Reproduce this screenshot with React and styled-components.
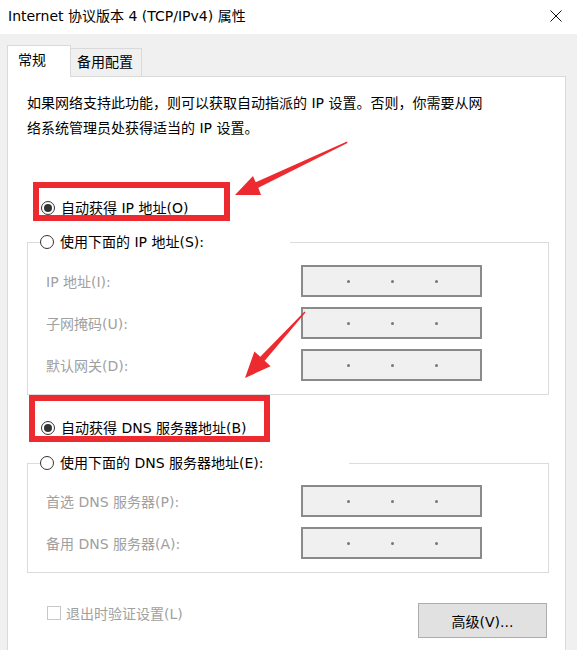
import styled, { createGlobalStyle } from "styled-components";

const GlobalStyle = createGlobalStyle`
  html, body {
    margin: 0;
    padding: 0;
    background: #f0f0f0;
  }
  * {
    box-sizing: border-box;
  }
`;

const FONT = `"DejaVu Sans", "Noto Sans CJK SC", sans-serif`;

const Window = styled.div`
  position: relative;
  width: 577px;
  height: 650px;
  overflow: hidden;
  background: #f0f0f0;
  font-family: ${FONT};
  font-size: 14px;
  color: #000;
  display: flex;
  flex-direction: column;
`;

const TitleBar = styled.div`
  height: 34px;
  background: #fff;
  display: flex;
  align-items: center;
  justify-content: space-between;
  padding: 0 15px 0 8px;
`;

const Title = styled.div`
  font-size: 14px;
  line-height: 1;
  padding-bottom: 2px;
`;

const CloseIcon = styled.svg`
  width: 12px;
  height: 12px;
  margin-bottom: 2px;
`;

const Body = styled.div`
  flex: 1;
  display: flex;
  flex-direction: column;
  padding: 11px 11px 0 7px;
`;

const TabRow = styled.div`
  display: flex;
  align-items: flex-end;
  height: 31px;
`;

const Tab = styled.div`
  position: relative;
  z-index: ${(p) => (p.$active ? 2 : 1)};
  height: ${(p) => (p.$active ? "32px" : "28px")};
  width: ${(p) => (p.$active ? "64px" : "71px")};
  margin-bottom: ${(p) => (p.$active ? "-1px" : "0")};
  background: ${(p) => (p.$active ? "#fff" : "#f0f0f0")};
  border: 1px solid #d9d9d9;
  border-bottom: none;
  border-left: ${(p) => (p.$active ? "1px solid #d9d9d9" : "none")};
  padding: ${(p) => (p.$active ? "4px 0 0 10px" : "3px 0 0 6px")};
  font-size: 14px;
  line-height: 20px;
`;

const Panel = styled.div`
  flex: 1;
  background: #fff;
  border: 1px solid #d9d9d9;
  border-bottom: none;
  padding: 14px 16px 0 19px;
  display: flex;
  flex-direction: column;
`;

const Description = styled.p`
  margin: 0;
  line-height: 25px;
  font-size: 14px;
  white-space: nowrap;
`;

const RadioRow = styled.label`
  display: flex;
  align-items: center;
  height: 20px;
  margin-top: ${(p) => p.$mt || "0px"};
  padding-left: 14px;
  gap: 6px;
  line-height: 20px;
`;

const RadioCircle = styled.span`
  width: 14px;
  height: 14px;
  border-radius: 50%;
  border: 1px solid #333;
  background: #fff;
  display: flex;
  align-items: center;
  justify-content: center;
  flex-shrink: 0;
  &::after {
    content: "";
    display: ${(p) => (p.$checked ? "block" : "none")};
    width: 8px;
    height: 8px;
    border-radius: 50%;
    background: #333;
  }
`;

const GroupBox = styled.fieldset`
  margin: ${(p) => p.$mt || "0px"} 0 0 0;
  padding: ${(p) => p.$pt} 0 13px 18px;
  border: 1px solid #dcdcdc;
  min-width: 0;
`;

const Legend = styled.legend`
  padding: 0;
  margin-left: -6px;
  width: ${(p) => p.$width};
  background: #fff;
`;

const LegendRow = styled.span`
  display: flex;
  align-items: center;
  height: 20px;
  gap: 6px;
  line-height: 20px;
`;

const FieldGrid = styled.div`
  display: grid;
  grid-template-columns: 255px 181px;
  row-gap: 10px;
  align-items: center;
`;

const FieldLabel = styled.span`
  color: #a0a0a0;
  font-size: 14px;
`;

const IpBox = styled.div`
  height: 32px;
  background: #f0f0f0;
  border: 2px solid #8a8a8a;
  display: grid;
  grid-template-columns: 47px 44px 44px 43px;
  align-items: center;
`;

const IpDot = styled.span`
  justify-self: end;
  width: 3px;
  height: 3px;
  border-radius: 50%;
  background: #777;
`;

const Footer = styled.div`
  margin-top: 30px;
  display: flex;
  justify-content: space-between;
  align-items: flex-start;
  padding: 0 2px 0 20px;
`;

const CheckRow = styled.label`
  display: flex;
  align-items: center;
  height: 20px;
  gap: 5px;
  color: #a0a0a0;
`;

const CheckBox = styled.span`
  width: 14px;
  height: 14px;
  border: 1px solid #c8c8c8;
  background: #fff;
`;

const Button = styled.button`
  width: 129px;
  height: 35px;
  background: #e1e1e1;
  border: 1px solid #adadad;
  font-family: ${FONT};
  font-size: 14px;
  color: #000;
  padding: 0;
`;

const Highlight = styled.div`
  position: absolute;
  left: ${(p) => p.$x}px;
  top: ${(p) => p.$y}px;
  width: ${(p) => p.$w}px;
  height: ${(p) => p.$h}px;
  border: 6px solid #ec2a2f;
  pointer-events: none;
`;

const Overlay = styled.svg`
  position: absolute;
  left: 0;
  top: 0;
  pointer-events: none;
`;

const IpField = () => (
  <IpBox>
    <IpDot />
    <IpDot />
    <IpDot />
  </IpBox>
);

export default function App() {
  return (
    <Window>
      <GlobalStyle />
      <TitleBar>
        <Title>Internet 协议版本 4 (TCP/IPv4) 属性</Title>
        <CloseIcon viewBox="0 0 12 12">
          <path d="M0.5 0.5 L11.5 11.5 M11.5 0.5 L0.5 11.5" stroke="#111" strokeWidth="1" />
        </CloseIcon>
      </TitleBar>
      <Body>
        <TabRow>
          <Tab $active>常规</Tab>
          <Tab>备用配置</Tab>
        </TabRow>
        <Panel>
          <Description>
            如果网络支持此功能，则可以获取自动指派的 IP 设置。否则，你需要从网
            <br />
            络系统管理员处获得适当的 IP 设置。
          </Description>
          <RadioRow $mt="57px">
            <RadioCircle $checked />
            自动获得 IP 地址(O)
          </RadioRow>
          <GroupBox $mt="14px" $pt="13px">
            <Legend $width="250px">
              <LegendRow>
                <RadioCircle />
                使用下面的 IP 地址(S):
              </LegendRow>
            </Legend>
            <FieldGrid>
              <FieldLabel>IP 地址(I):</FieldLabel>
              <IpField />
              <FieldLabel>子网掩码(U):</FieldLabel>
              <IpField />
              <FieldLabel>默认网关(D):</FieldLabel>
              <IpField />
            </FieldGrid>
          </GroupBox>
          <RadioRow $mt="23px">
            <RadioCircle $checked />
            自动获得 DNS 服务器地址(B)
          </RadioRow>
          <GroupBox $mt="15px" $pt="12px">
            <Legend $width="309px">
              <LegendRow>
                <RadioCircle />
                使用下面的 DNS 服务器地址(E):
              </LegendRow>
            </Legend>
            <FieldGrid>
              <FieldLabel>首选 DNS 服务器(P):</FieldLabel>
              <IpField />
              <FieldLabel>备用 DNS 服务器(A):</FieldLabel>
              <IpField />
            </FieldGrid>
          </GroupBox>
          <Footer>
            <CheckRow>
              <CheckBox />
              退出时验证设置(L)
            </CheckRow>
            <Button>高级(V)...</Button>
          </Footer>
        </Panel>
      </Body>
      <Highlight $x={33} $y={182} $w={197} $h={39} />
      <Highlight $x={29} $y={395} $w={241} $h={47} />
      <Overlay width="577" height="650" viewBox="0 0 577 650">
        <polygon
          fill="#ec2a2f"
          points="235,195 253,176 255.7,182.3 347,141.5 347.5,143 258.3,187.7 261,195"
        />
        <polygon
          fill="#ec2a2f"
          points="245,378 254.4,351.4 260.3,356.8 304.5,311.5 305.5,312.5 264.7,360.8 270.6,366.2"
        />
      </Overlay>
    </Window>
  );
}
